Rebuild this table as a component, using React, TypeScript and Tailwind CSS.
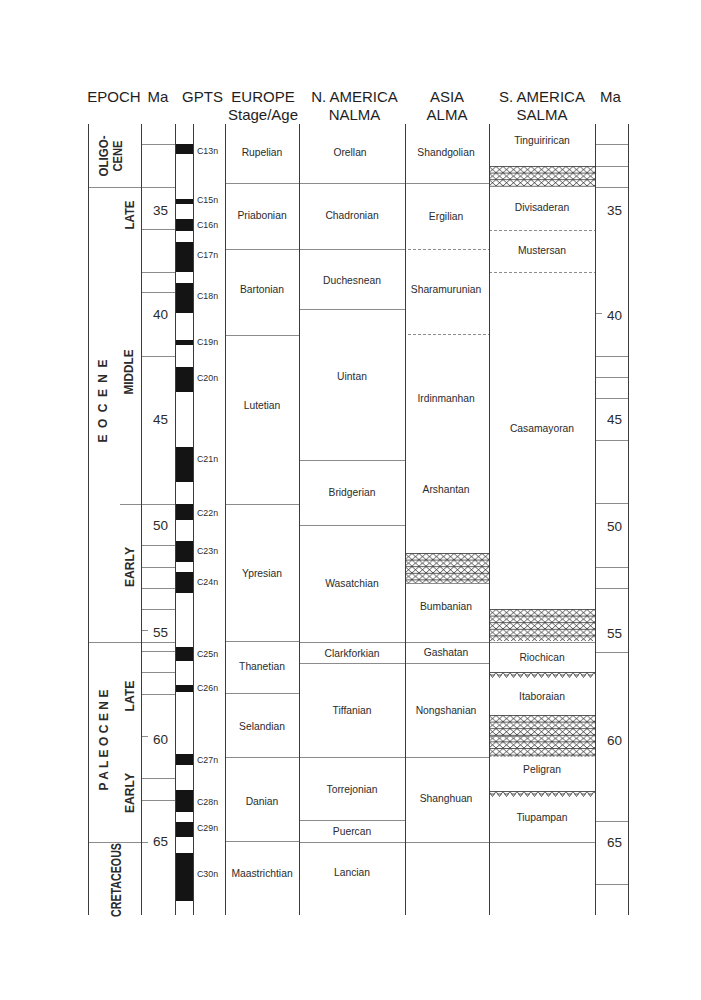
import React from "react";

const FONT = '"Liberation Sans", Arial, sans-serif';

type L = [number, number, number];

const VX = [88, 141, 175, 193, 225, 299, 405, 489, 595, 628];

const solid: L[] = [
  // epoch + Ma left
  [88, 175, 187],
  [120, 175, 504],
  [88, 175, 642],
  [88, 148, 842],
  [141, 175, 144],
  [141, 175, 229],
  [141, 175, 272],
  [142, 175, 292],
  [141, 175, 356],
  [141, 175, 545],
  [141, 175, 567],
  [141, 175, 588],
  [141, 175, 609],
  [141, 175, 651],
  [141, 175, 672],
  [141, 175, 694],
  [141, 175, 778],
  [141, 175, 800],
  [141, 148, 630],
  [141, 148, 736],
  // Europe
  ...[183, 249, 335, 504, 641, 693, 757, 841].map((y) => [225, 299, y] as L),
  // N. America
  ...[183, 249, 309, 460, 525, 642, 663, 757, 820, 842].map((y) => [299, 405, y] as L),
  // Asia
  ...[183, 583, 642, 663, 757, 842].map((y) => [405, 489, y] as L),
  // S. America
  ...[186, 642, 842].map((y) => [489, 595, y] as L),
  [489, 529, 736],
  // Ma right
  ...[144, 166, 187, 356, 377, 398, 440, 503, 567, 588, 652, 821, 884].map((y) => [595, 628, y] as L),
  [595, 602, 313],
];

const dashed: L[] = [
  [408, 489, 249],
  [408, 489, 334],
  [489, 595, 230],
  [489, 595, 272],
];

const bars: [number, number][] = [
  [144, 154], [199, 204], [219, 231], [242, 272], [283, 313], [340, 345],
  [367, 392], [447, 482], [504, 520], [541, 562], [572, 593], [647, 661],
  [685, 692], [754, 765], [790, 812], [822, 837], [853, 901],
];

const chrons: [string, number][] = [
  ["C13n", 151], ["C15n", 200], ["C16n", 225], ["C17n", 255], ["C18n", 296],
  ["C19n", 342], ["C20n", 378], ["C21n", 459], ["C22n", 513], ["C23n", 551],
  ["C24n", 582], ["C25n", 654], ["C26n", 688], ["C27n", 760], ["C28n", 802],
  ["C29n", 828], ["C30n", 874],
];

const labels: [string, number, number][] = [
  ["Rupelian", 262, 152], ["Priabonian", 262, 215], ["Bartonian", 262, 289],
  ["Lutetian", 262, 405], ["Ypresian", 262, 573], ["Thanetian", 262, 666],
  ["Selandian", 262, 726], ["Danian", 262, 801], ["Maastrichtian", 262, 873],
  ["Orellan", 350, 152], ["Chadronian", 352, 215], ["Duchesnean", 352, 280],
  ["Uintan", 352, 376], ["Bridgerian", 352, 492], ["Wasatchian", 352, 583],
  ["Clarkforkian", 352, 653], ["Tiffanian", 352, 710], ["Torrejonian", 352, 789],
  ["Puercan", 352, 831], ["Lancian", 352, 872],
  ["Shandgolian", 446, 152], ["Ergilian", 446, 216], ["Sharamurunian", 446, 289],
  ["Irdinmanhan", 446, 398], ["Arshantan", 446, 489], ["Bumbanian", 446, 606],
  ["Gashatan", 446, 652], ["Nongshanian", 446, 710], ["Shanghuan", 446, 798],
  ["Tinguirirican", 542, 140], ["Divisaderan", 542, 207], ["Mustersan", 542, 250],
  ["Casamayoran", 542, 428], ["Riochican", 542, 657], ["Itaboraian", 542, 696],
  ["Peligran", 542, 769], ["Tiupampan", 542, 817],
];

const maLeft: [string, number][] = [
  ["35", 210], ["40", 314], ["45", 419], ["50", 525], ["55", 632], ["60", 739], ["65", 841],
];
const maRight: [string, number][] = [
  ["35", 210], ["40", 315], ["45", 419], ["50", 526], ["55", 633], ["60", 740], ["65", 842],
];

const rotated: { t: string; cx: number; cy: number; fs: number; len: number }[] = [
  { t: "OLIGO-", cx: 104, cy: 156, fs: 12, len: 41 },
  { t: "CENE", cx: 118, cy: 156, fs: 12, len: 31 },
  { t: "LATE", cx: 129.5, cy: 215, fs: 12, len: 29 },
  { t: "E O C E N E", cx: 102.5, cy: 401, fs: 12, len: 83 },
  { t: "MIDDLE", cx: 129, cy: 372, fs: 12, len: 45 },
  { t: "EARLY", cx: 129.5, cy: 567, fs: 12, len: 40 },
  { t: "P A L E O C E N E", cx: 103.7, cy: 740, fs: 12, len: 101 },
  { t: "LATE", cx: 130, cy: 696, fs: 12, len: 31 },
  { t: "EARLY", cx: 130, cy: 793, fs: 12, len: 40 },
  { t: "CRETACEOUS", cx: 116, cy: 880, fs: 14, len: 74 },
];

const bands: { x1: number; x2: number; y1: number; y2: number; zig?: boolean }[] = [
  { x1: 489, x2: 595, y1: 166, y2: 186 },
  { x1: 405, x2: 489, y1: 553, y2: 583 },
  { x1: 489, x2: 595, y1: 609, y2: 641 },
  { x1: 489, x2: 595, y1: 672, y2: 678, zig: true },
  { x1: 489, x2: 595, y1: 715, y2: 757 },
  { x1: 489, x2: 595, y1: 791, y2: 797, zig: true },
];

const LABEL_FS = 10.3;
const h = (v: number) => v + 0.5;

function Chart() {
  return (
    <svg width="701" height="876" viewBox="0 124 701 876" className="block">
      <defs>
        {bands.map((b, i) => (
          <pattern
            key={i}
            id={`hatch${i}`}
            x={b.x1}
            y={b.y1}
            width="7"
            height={b.zig ? 6 : 6.6}
            patternUnits="userSpaceOnUse"
          >
            {b.zig ? (
              <path d="M0 0.5H7 M0 0.5L3.5 5.5L7 0.5 M1.5 3 L5.5 3" stroke="#3a3a3a" strokeWidth="0.85" fill="none" />
            ) : (
              <path d="M0 0.5H7 M0 0.5L7 6.6 M7 0.5L0 6.6" stroke="#3a3a3a" strokeWidth="0.85" fill="none" />
            )}
          </pattern>
        ))}
      </defs>

      {bands.map((b, i) => (
        <rect key={i} x={b.x1} y={b.y1} width={b.x2 - b.x1} height={b.y2 - b.y1} fill={`url(#hatch${i})`} />
      ))}

      {bars.map(([a, b], i) => (
        <rect key={i} x={175} y={a} width={18} height={b - a} fill="#141414" />
      ))}

      {solid.map(([x1, x2, y], i) => (
        <line key={i} x1={x1} x2={x2} y1={h(y)} y2={h(y)} stroke="#8c8c8c" strokeWidth="1" />
      ))}
      {dashed.map(([x1, x2, y], i) => (
        <line key={i} x1={x1} x2={x2} y1={h(y)} y2={h(y)} stroke="#8c8c8c" strokeWidth="1" strokeDasharray="3 2" />
      ))}

      {VX.map((x, i) => (
        <line key={i} x1={h(x)} x2={h(x)} y1={124} y2={915} stroke="#3c3c3c" strokeWidth="1" />
      ))}

      <g fontFamily={FONT} fill="#2b2b2b">
        {labels.map(([t, x, y]) => (
          <text key={t} x={x} y={y + 0.36 * LABEL_FS} fontSize={LABEL_FS} textAnchor="middle">
            {t}
          </text>
        ))}
        {chrons.map(([t, y]) => (
          <text key={t} x={197} y={y + 0.36 * 8.8} fontSize={8.8}>
            {t}
          </text>
        ))}
        {maLeft.map(([t, y]) => (
          <text key={"l" + t} x={160.5} y={y + 0.36 * 13.5} fontSize={13.5} textAnchor="middle">
            {t}
          </text>
        ))}
        {maRight.map(([t, y]) => (
          <text key={"r" + t} x={614.5} y={y + 0.36 * 13.5} fontSize={13.5} textAnchor="middle">
            {t}
          </text>
        ))}
        {rotated.map((r, i) => (
          <text
            key={i}
            x={r.cx}
            y={r.cy + 0.36 * r.fs}
            fontSize={r.fs}
            fontWeight="bold"
            textAnchor="middle"
            textLength={r.len}
            lengthAdjust={r.t.includes(" ") ? "spacing" : "spacingAndGlyphs"}
            transform={`rotate(-90 ${r.cx} ${r.cy})`}
          >
            {r.t}
          </text>
        ))}
      </g>
    </svg>
  );
}

function Head({ w, lines }: { w: string; lines: string[] }) {
  return (
    <div className={`${w} flex flex-col items-center whitespace-nowrap`}>
      {lines.map((l) => (
        <span key={l}>{l}</span>
      ))}
    </div>
  );
}

export default function App() {
  return (
    <div className="w-[701px] h-[1000px] bg-white overflow-hidden">
      <div className="flex pl-[84px] pt-[88px] h-[124px] text-[15px] leading-[18px] text-[#1e1e1e] font-['Liberation_Sans',Arial,sans-serif]">
        <Head w="w-[60px]" lines={["EPOCH"]} />
        <Head w="w-[28px]" lines={["Ma"]} />
        <Head w="w-[61px]" lines={["GPTS"]} />
        <Head w="w-[60px]" lines={["EUROPE", "Stage/Age"]} />
        <Head w="w-[123px]" lines={["N. AMERICA", "NALMA"]} />
        <Head w="w-[62px]" lines={["ASIA", "ALMA"]} />
        <Head w="w-[128px]" lines={["S. AMERICA", "SALMA"]} />
        <Head w="w-[9px]" lines={["Ma"]} />
      </div>
      <Chart />
    </div>
  );
}
